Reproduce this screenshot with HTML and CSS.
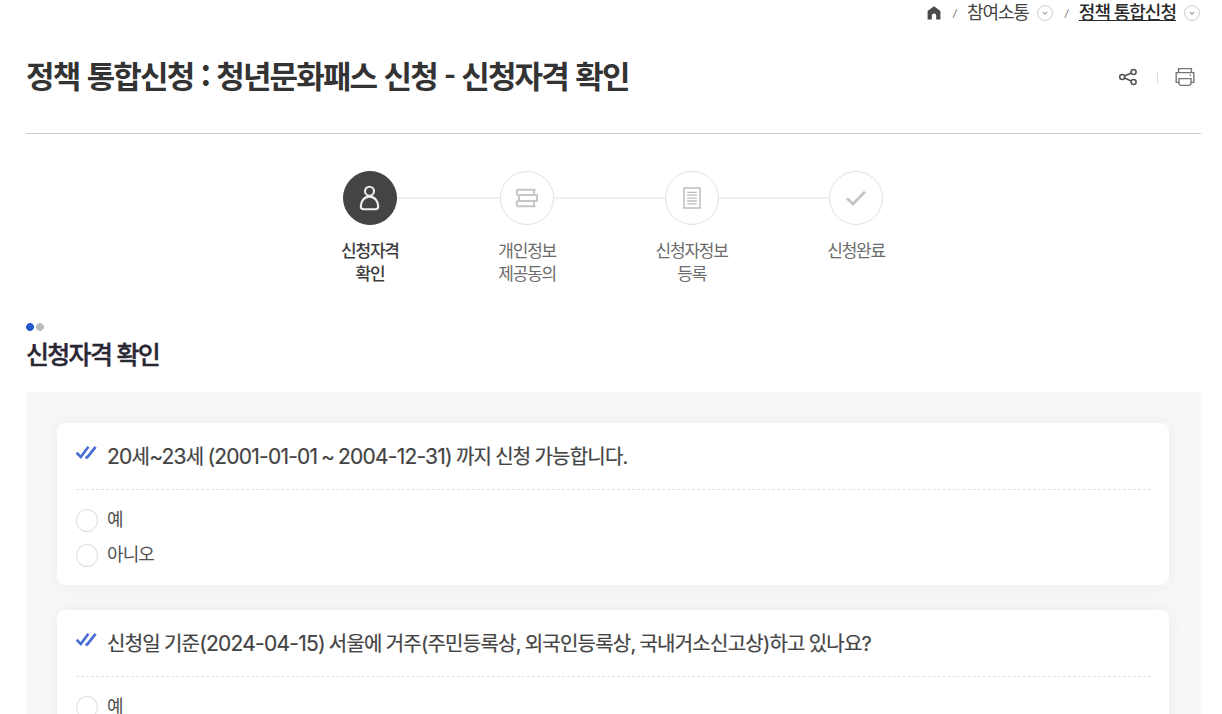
FILE: index.html
```html
<!DOCTYPE html>
<html lang="ko">
<head>
    <meta charset="UTF-8">
    <meta name="viewport" content="width=device-width, initial-scale=1">
    <title>정책 통합신청</title>
    <link rel="stylesheet" href="styles.css">
</head>
<body>
    <div class="wrapper">
        <nav class="breadcrumb">
            <a href="#" class="home" aria-label="홈">
                <svg width="14" height="14" viewBox="0 0 14 14"><path d="M7 0.3 L13.4 5 V13.4 H9.2 V9.6 a2.2 2.2 0 0 0-4.4 0 V13.4 H0.6 V5 Z" fill="#4a4a4a"/></svg>
            </a>
            <span class="slash">/</span>
            <a href="#" class="crumb">참여소통</a>
            <button type="button" class="crumb-toggle" aria-label="메뉴 열기">
                <svg width="16" height="16" viewBox="0 0 16 16"><circle cx="8" cy="8" r="7.4"/><path d="M5.8 7 L8 9.2 L10.2 7"/></svg>
            </button>
            <span class="slash">/</span>
            <a href="#" class="crumb current">정책 통합신청</a>
            <button type="button" class="crumb-toggle" aria-label="메뉴 열기">
                <svg width="16" height="16" viewBox="0 0 16 16"><circle cx="8" cy="8" r="7.4"/><path d="M5.8 7 L8 9.2 L10.2 7"/></svg>
            </button>
        </nav>

        <header class="page-header">
            <h1>정책 통합신청 : 청년문화패스 신청 - 신청자격 확인</h1>
            <div class="tools">
                <a href="#" aria-label="공유">
                    <svg width="20" height="20" viewBox="0 0 20 20" fill="none" stroke="#555" stroke-width="1.6"><circle cx="4.2" cy="10" r="2.5"/><circle cx="15.6" cy="5" r="2.5"/><circle cx="15.6" cy="15" r="2.5"/><path d="M6.5 9 L13.3 6 M6.5 11 L13.3 14"/></svg>
                </a>
                <span class="divider"></span>
                <a href="#" aria-label="인쇄">
                    <svg width="20" height="20" viewBox="0 0 20 20" fill="none" stroke="#777" stroke-width="1.4"><path d="M3.6 5.6 V1.6 H16.4 V5.6 M4 15.4 H1.2 V5.6 H18.8 V15.4 H16"/><path d="M4 11.6 H16 V16.9 L14.5 18.4 H5.5 L4 16.9 Z"/><path d="M14.6 8.3 H16"/></svg>
                </a>
            </div>
        </header>

        <ol class="steps">
            <li class="step active">
                <span class="step-icon">
                    <svg width="22" height="28" viewBox="0 0 22 28" fill="none" stroke="#eee" stroke-width="2.1"><circle cx="10.5" cy="7.2" r="4.5"/><path d="M1.8 22.5 C1.8 17 5.4 12.6 10.5 12.6 S19.2 17 19.2 22.5 Q19.2 25.2 16.4 25.2 H4.6 Q1.8 25.2 1.8 22.5 Z"/></svg>
                </span>
                <span class="step-name">신청자격<br>확인</span>
            </li>
            <li class="step">
                <span class="step-icon">
                    <svg width="24" height="20" viewBox="0 0 24 20" fill="none" stroke="#c6c6c6" stroke-width="2"><path d="M1.8 1.8 H20.6 M1.8 7 H22.6 M1.8 13 H22.6 M1.8 18.2 H20.6 M1.8 1.8 V7 M1.8 13 V18.2 M4 7 V13 M19 1.8 V7 M22 7 V13 M19 13 V18.2"/></svg>
                </span>
                <span class="step-name">개인정보<br>제공동의</span>
            </li>
            <li class="step">
                <span class="step-icon">
                    <svg width="18" height="22" viewBox="0 0 18 22" fill="none" stroke="#bdbdbd" stroke-width="1.5"><path d="M1 1 H17 V21 H1 Z"/><path d="M4.2 5.3 H13.8 M4.2 8.2 H13.8 M4.2 11.1 H13.8 M4.2 14 H13.8 M4.2 16.9 H13.8" stroke-width="1.3"/></svg>
                </span>
                <span class="step-name">신청자정보<br>등록</span>
            </li>
            <li class="step">
                <span class="step-icon">
                    <svg width="22" height="18" viewBox="0 0 22 18" fill="none" stroke="#c6c6c6" stroke-width="2.8"><path d="M2 9.2 L8 15 L20 2.8"/></svg>
                </span>
                <span class="step-name">신청완료</span>
            </li>
        </ol>

        <main>
            <h2>신청자격 확인</h2>
            <form class="question-list">
                <fieldset class="question">
                    <div class="question-title">
                        <svg width="22" height="16" viewBox="0 0 22 16" fill="none" stroke="#4a6fd4" stroke-width="2.7"><path d="M0.6 7.6 L4.8 12 L12.4 1.8 M9.4 12.6 L11.2 12.4 L19.6 1.8"/></svg>
                        <p><span class="num">20</span>세<span class="num">~23</span>세 <span class="num">(2001-01-01 ~ 2004-12-31)</span> 까지 신청 가능합니다.</p>
                    </div>
                    <label class="option"><input type="radio" name="age">예</label>
                    <label class="option"><input type="radio" name="age">아니오</label>
                </fieldset>
                <fieldset class="question">
                    <div class="question-title">
                        <svg width="22" height="16" viewBox="0 0 22 16" fill="none" stroke="#4a6fd4" stroke-width="2.7"><path d="M0.6 7.6 L4.8 12 L12.4 1.8 M9.4 12.6 L11.2 12.4 L19.6 1.8"/></svg>
                        <p>신청일 기준<span class="num">(2024-04-15)</span> 서울에 거주(주민등록상, 외국인등록상, 국내거소신고상)하고 있나요?</p>
                    </div>
                    <label class="option"><input type="radio" name="residence">예</label>
                </fieldset>
            </form>
        </main>
    </div>
</body>
</html>
```
FILE: styles.css
```css
* {
    box-sizing: border-box;
}

body, h1, h2, p, ol, fieldset {
    margin: 0;
    padding: 0;
}

body {
    height: 714px;
    overflow: hidden;
    font-family: Inter, "Noto Sans CJK KR", sans-serif;
    background-color: #fff;
    color: #333;
}

a {
    color: inherit;
    text-decoration: none;
}

svg {
    display: block;
}

.wrapper {
    margin: 0 21px 0 26px;
}

/* breadcrumb */
.breadcrumb {
    display: flex;
    align-items: center;
    justify-content: flex-end;
    height: 25px;
    padding-right: 1px;
}

.slash {
    width: 5px;
    margin: 0 9px 0 12px;
    font-size: 10px;
    font-style: italic;
    color: #666;
}

.crumb {
    font-size: 18px;
    line-height: 24px;
    letter-spacing: -1.1px;
    color: #444;
}

.crumb.current {
    font-weight: 500;
    letter-spacing: -1px;
    color: #2a2a2a;
    text-decoration: underline;
}

.crumb-toggle {
    margin-left: 8px;
    padding: 0;
    border: none;
    background: none;
    cursor: pointer;
}

.crumb-toggle svg {
    fill: none;
    stroke: #ccc;
    stroke-width: 1;
}

.crumb-toggle path {
    stroke: #aaa;
    stroke-width: 1.3;
}

/* title */
.page-header {
    display: flex;
    align-items: center;
    justify-content: space-between;
    height: 109px;
    padding-bottom: 4px;
    border-bottom: 1px solid #ccc;
}

h1 {
    margin-top: -5px;
    font-family: "Noto Sans CJK KR", sans-serif;
    font-size: 31px;
    font-weight: 700;
    letter-spacing: -1.85px;
    word-spacing: 0.5px;
}

.tools {
    display: flex;
    align-items: center;
    padding-right: 6px;
}

.divider {
    width: 1px;
    height: 13px;
    margin: 0 17px 0 19px;
    background-color: #ddd;
}

/* steps */
.steps {
    position: relative;
    display: flex;
    justify-content: space-between;
    width: 544px;
    height: 150px;
    margin: 37px auto 0 315px;
    list-style: none;
}

.steps::before {
    content: "";
    position: absolute;
    top: 26px;
    left: 30px;
    right: 30px;
    height: 2px;
    background-color: #f0f0f0;
}

.step {
    position: relative;
    display: flex;
    flex-direction: column;
    align-items: center;
    color: #6c6c6c;
}

.step-icon {
    display: flex;
    align-items: center;
    justify-content: center;
    width: 54px;
    height: 54px;
    border: 1px solid #e2e2e2;
    border-radius: 50%;
    background-color: #fff;
}

.step-name {
    margin-top: 15px;
    font-size: 17px;
    line-height: 23px;
    letter-spacing: -1.2px;
    text-align: center;
}

.step.active {
    font-weight: 500;
    color: #3c3c3c;
}

.step.active .step-icon {
    border-color: #444;
    background-color: #444;
}

/* section */
h2 {
    padding-top: 17px;
    font-family: "Noto Sans CJK KR", sans-serif;
    font-size: 25px;
    font-weight: 500;
    line-height: 30px;
    letter-spacing: -1.7px;
    color: #2a2735;
    -webkit-text-stroke: 0.4px #2a2735;
    background: radial-gradient(circle 4px at 4px 6px, #2459c9 3.6px, transparent 4.2px),
                radial-gradient(circle 4px at 14px 6px, #b9bdbd 3.6px, transparent 4.2px);
}

.question-list {
    margin-top: 24px;
    padding: 31px 32px 31px 31px;
    background-color: #f8f8f8;
}

.question {
    min-width: 0;
    height: 162px;
    margin-bottom: 25px;
    padding: 0 18px 0 19px;
    border: none;
    border-radius: 8px;
    background-color: #fff;
    box-shadow: 0 0 20px rgba(0, 0, 0, 0.06);
}

.question-title {
    display: flex;
    align-items: center;
    height: 67px;
    margin-bottom: 12px;
    border-bottom: 1px dashed #e2e2e2;
}

.question-title svg {
    margin: -6px 9px 0 0;
}

.question-title p {
    margin-top: 2px;
    font-size: 20px;
    line-height: 30px;
    letter-spacing: -0.76px;
    word-spacing: -0.9px;
    color: #444;
    -webkit-text-stroke: 0.2px #444;
}

.num {
    font-size: 21px;
    letter-spacing: -0.77px;
    word-spacing: -1.4px;
}

.option {
    display: flex;
    align-items: center;
    height: 35px;
    font-size: 18px;
    line-height: 20px;
    letter-spacing: -0.9px;
    color: #505050;
}

.option input {
    width: 22px;
    height: 23px;
    margin: 1px 9px 0 0;
    appearance: none;
    border: 1px solid #e0e0e0;
    border-radius: 50%;
    background-color: #fff;
}
```
